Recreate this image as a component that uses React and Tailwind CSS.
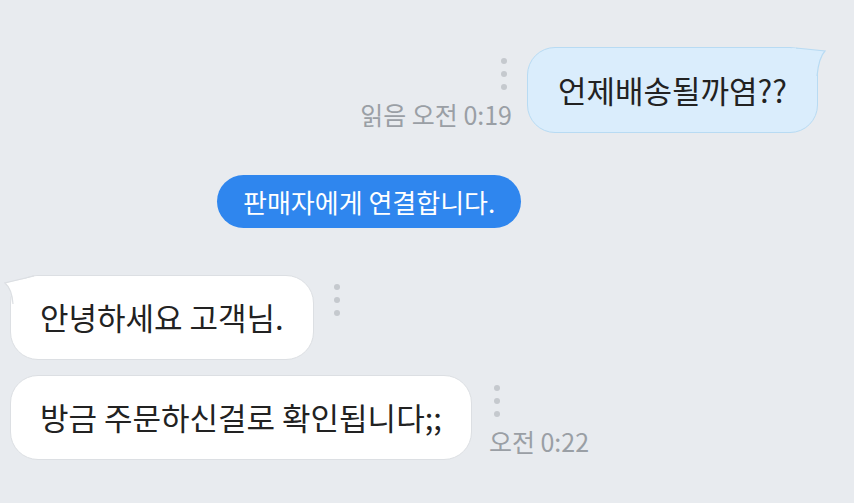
/* 채팅 화면: 보낸 말풍선, 안내 pill, 받은 말풍선 */
const FONT = { fontFamily: '"Noto Sans CJK KR", "Noto Sans", sans-serif' };

function Dots({ className = "" }) {
  return (
    <div className={"flex flex-col gap-[7px] " + className}>
      <span className="w-[6px] h-[6px] rounded-full bg-[#c5c9ce]" />
      <span className="w-[6px] h-[6px] rounded-full bg-[#c5c9ce]" />
      <span className="w-[6px] h-[6px] rounded-full bg-[#c5c9ce]" />
    </div>
  );
}

function TailRight({ fill, stroke }) {
  return (
    <svg className="absolute -top-[1px] -right-[9px]" width="34" height="30" viewBox="0 0 34 30">
      <path d="M0 1 L33 4 Q27 10 25 29 L0 29 Z" fill={fill} />
      <path d="M4 1 L33 4 Q27 10 25 29" fill="none" stroke={stroke} strokeWidth="1.2" />
    </svg>
  );
}

function TailLeft({ fill, stroke }) {
  return (
    <svg className="absolute -top-[1px] -left-[7px]" width="34" height="30" viewBox="0 0 34 30">
      <path d="M34 1 L1 8 Q8 14 9 29 L34 29 Z" fill={fill} />
      <path d="M30 1 L1 8 Q8 14 9 29" fill="none" stroke={stroke} strokeWidth="1.2" />
    </svg>
  );
}

export default function App() {
  return (
    <div className="w-[854px] h-[503px] overflow-hidden bg-[#e8ebef] text-[#222]" style={FONT}>
      {/* 보낸 메시지 */}
      <div className="flex justify-end items-end pt-[47px] pr-[36px] gap-[15px]">
        <div className="flex flex-col items-end mb-[5px]">
          <Dots className="mr-[5px]" />
          <div className="mt-[10px] text-[25px] leading-[28px] text-[#9a9fa5]">읽음 오전 0:19</div>
        </div>
        <div className="relative h-[86px] px-[30px] flex items-center rounded-[28px] bg-[#daedfc] border border-[#b8dbf3]">
          <TailRight fill="#daedfc" stroke="#b8dbf3" />
          <span className="relative text-[31px]">언제배송될까염??</span>
        </div>
      </div>

      {/* 안내 */}
      <div className="flex pl-[217px] mt-[42px]">
        <div className="h-[53px] px-[26px] flex items-center rounded-full bg-[#2f86ee] text-white text-[26px]">
          판매자에게 연결합니다.
        </div>
      </div>

      {/* 받은 메시지 */}
      <div className="flex items-start pl-[10px] mt-[47px] gap-[20px]">
        <div className="relative h-[85px] px-[29px] flex items-center rounded-[28px] bg-white border border-[#dcdfe3]">
          <TailLeft fill="#ffffff" stroke="#dcdfe3" />
          <span className="relative text-[31px]">안녕하세요 고객님.</span>
        </div>
        <Dots className="mt-[9px]" />
      </div>

      <div className="flex items-end pl-[10px] mt-[15px] gap-[17px]">
        <div className="h-[85px] px-[29px] flex items-center rounded-[28px] bg-white border border-[#dcdfe3]">
          <span className="text-[31px]">방금 주문하신걸로 확인됩니다;;</span>
        </div>
        <div className="flex flex-col items-start mb-[5px]">
          <Dots className="ml-[5px]" />
          <div className="mt-[10px] text-[25px] leading-[28px] text-[#9a9fa5]">오전 0:22</div>
        </div>
      </div>
    </div>
  );
}
